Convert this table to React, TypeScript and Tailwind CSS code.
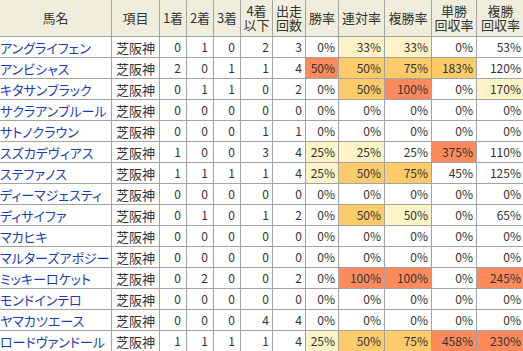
import React from "react"

type Tone = "" | "y" | "o" | "r"

interface Row {
  name: string
  place: [number, number, number, number]
  runs: number
  rates: [string, Tone][]
}

const rows: Row[] = [
  { name: "アングライフェン", place: [0, 1, 0, 2], runs: 3, rates: [["0%", ""], ["33%", "y"], ["33%", "y"], ["0%", ""], ["53%", ""]] },
  { name: "アンビシャス", place: [2, 0, 1, 1], runs: 4, rates: [["50%", "r"], ["50%", "o"], ["75%", "o"], ["183%", "o"], ["120%", ""]] },
  { name: "キタサンブラック", place: [0, 1, 1, 0], runs: 2, rates: [["0%", ""], ["50%", "o"], ["100%", "r"], ["0%", ""], ["170%", "y"]] },
  { name: "サクラアンブルール", place: [0, 0, 0, 0], runs: 0, rates: [["0%", ""], ["0%", ""], ["0%", ""], ["0%", ""], ["0%", ""]] },
  { name: "サトノクラウン", place: [0, 0, 0, 1], runs: 1, rates: [["0%", ""], ["0%", ""], ["0%", ""], ["0%", ""], ["0%", ""]] },
  { name: "スズカデヴィアス", place: [1, 0, 0, 3], runs: 4, rates: [["25%", "y"], ["25%", "y"], ["25%", ""], ["375%", "r"], ["110%", ""]] },
  { name: "ステファノス", place: [1, 1, 1, 1], runs: 4, rates: [["25%", "y"], ["50%", "o"], ["75%", "o"], ["45%", ""], ["125%", ""]] },
  { name: "ディーマジェスティ", place: [0, 0, 0, 0], runs: 0, rates: [["0%", ""], ["0%", ""], ["0%", ""], ["0%", ""], ["0%", ""]] },
  { name: "ディサイファ", place: [0, 1, 0, 1], runs: 2, rates: [["0%", ""], ["50%", "o"], ["50%", "y"], ["0%", ""], ["65%", ""]] },
  { name: "マカヒキ", place: [0, 0, 0, 0], runs: 0, rates: [["0%", ""], ["0%", ""], ["0%", ""], ["0%", ""], ["0%", ""]] },
  { name: "マルターズアポジー", place: [0, 0, 0, 0], runs: 0, rates: [["0%", ""], ["0%", ""], ["0%", ""], ["0%", ""], ["0%", ""]] },
  { name: "ミッキーロケット", place: [0, 2, 0, 0], runs: 2, rates: [["0%", ""], ["100%", "r"], ["100%", "r"], ["0%", ""], ["245%", "r"]] },
  { name: "モンドインテロ", place: [0, 0, 0, 0], runs: 0, rates: [["0%", ""], ["0%", ""], ["0%", ""], ["0%", ""], ["0%", ""]] },
  { name: "ヤマカツエース", place: [0, 0, 0, 4], runs: 4, rates: [["0%", ""], ["0%", ""], ["0%", ""], ["0%", ""], ["0%", ""]] },
  { name: "ロードヴァンドール", place: [1, 1, 1, 1], runs: 4, rates: [["25%", "y"], ["50%", "o"], ["75%", "o"], ["458%", "r"], ["230%", "r"]] },
]

const toneBg: Record<Tone, string> = {
  "": "bg-white",
  y: "bg-[#fdf3c6]",
  o: "bg-[#fdcb69]",
  r: "bg-[#fd8a5c]",
}

const headers = ["馬名", "項目", "1着", "2着", "3着", "4着\n以下", "出走\n回数", "勝率", "連対率", "複勝率", "単勝\n回収率", "複勝\n回収率"]

export default function App() {
  return (
    <div className="w-[523px] h-[351px] overflow-hidden bg-white">
      <div
        className="grid w-[524px] gap-px bg-[#a3a3a3] text-[12px] text-[#333] grid-cols-[111px_47px_26px_26px_26px_31px_32px_32px_45px_46px_44px_47px] grid-rows-[36px] auto-rows-[20px]"
        style={{ fontFamily: '"Noto Sans CJK JP", "Noto Sans", sans-serif' }}
      >
        {headers.map((h) => (
          <div
            key={h}
            className="flex items-center justify-center bg-[#efeedc] text-center text-[13px] whitespace-pre leading-[14px]"
          >
            {h}
          </div>
        ))}
        {rows.map((r) => (
          <React.Fragment key={r.name}>
            <div className="flex items-center bg-white text-[13px] text-[#1a3db5] whitespace-nowrap leading-none [font-feature-settings:'palt']">
              {r.name}
            </div>
            <div className="flex items-center bg-white pl-[4px] text-[13px] leading-none">芝阪神</div>
            {r.place.slice(0, 3).map((n, i) => (
              <div key={i} className="flex items-center justify-end bg-white pr-[5px] leading-none">
                {n}
              </div>
            ))}
            <div className="flex items-center justify-end bg-white pr-[3px] leading-none">{r.place[3]}</div>
            <div className="flex items-center justify-end bg-white pr-[3px] leading-none">{r.runs}</div>
            {r.rates.map(([v, t], i) => (
              <div key={i} className={`flex items-center justify-end pr-[3px] leading-none ${toneBg[t]}`}>
                {v}
              </div>
            ))}
          </React.Fragment>
        ))}
      </div>
    </div>
  )
}
